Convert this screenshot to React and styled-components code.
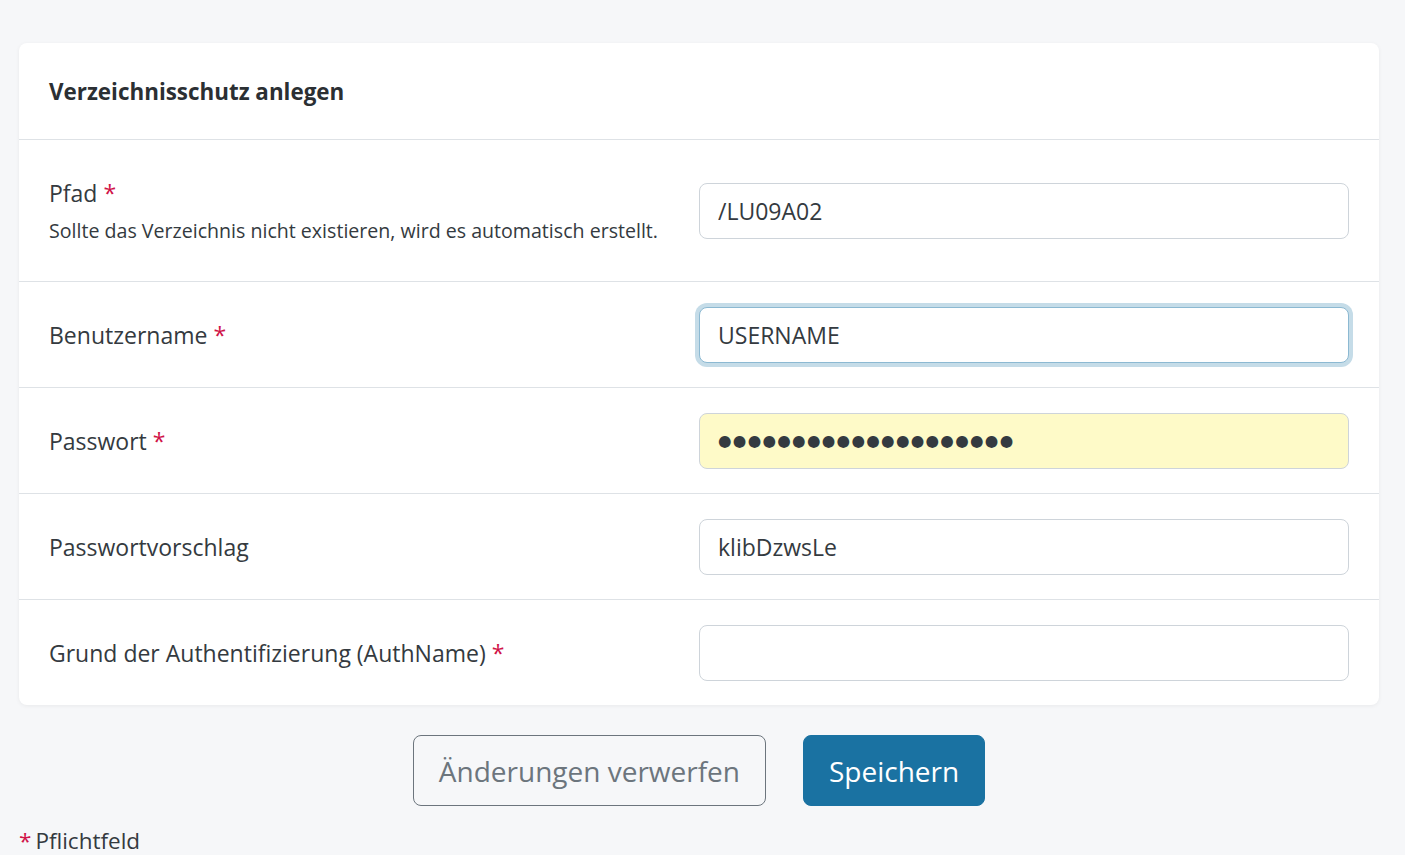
import React from "react";
import styled, { createGlobalStyle } from "styled-components";

const GlobalStyle = createGlobalStyle`
  html, body {
    margin: 0;
    padding: 0;
    background: #f6f7f9;
  }
  body {
    font-family: "Segoe UI", "Open Sans", sans-serif;
    color: #343a40;
  }
  * {
    box-sizing: border-box;
  }
`;

const Page = styled.div`
  padding: 43px 26px 0 19px;
`;

const Card = styled.div`
  background: #fff;
  border-radius: 8px;
  box-shadow: 0 1px 4px rgba(0, 0, 0, 0.06);
`;

const CardHeader = styled.div`
  height: 97px;
  display: flex;
  align-items: center;
  padding: 0 30px;
  border-bottom: 1px solid #dee2e6;
`;

const Title = styled.h2`
  margin: 0;
  font-size: 22.4px;
  font-weight: 700;
  color: #2b2f33;
`;

const Row = styled.div`
  display: grid;
  grid-template-columns: 650px 650px;
  align-items: center;
  padding: ${(p) => (p.tall ? "38px 30px 37px" : "25px 30px 24px")};
  border-bottom: ${(p) => (p.last ? "none" : "1px solid #dee2e6")};
`;

const LabelBox = styled.div`
  display: flex;
  flex-direction: column;
  gap: 8px;
`;

const Label = styled.label`
  font-size: 23px;
  line-height: 31px;
  color: #343a40;
`;

const Req = styled.span`
  color: #d01348;
  margin-left: ${(p) => (p.lead ? "0" : "6px")};
  margin-right: ${(p) => (p.lead ? "4px" : "0")};
`;

const Help = styled.div`
  font-size: 19.6px;
  line-height: 27px;
  color: #343a40;
`;

const Input = styled.input`
  width: 650px;
  height: 56px;
  padding: 0 18px;
  font-family: inherit;
  font-size: 23px;
  color: #343a40;
  caret-color: #212529;
  border: 1px solid ${(p) => (p.$focused ? "#8cb9d2" : "#ced4da")};
  border-radius: 8px;
  background: #fff;
  box-shadow: ${(p) => (p.$focused ? "0 0 0 4px #c5dce8" : "none")};
  outline: none;
`;

const MaskedInput = styled(Input)`
  background: #fefac8;
  font-family: "DejaVu Sans", sans-serif;
  font-size: 15.5px;
  letter-spacing: 1.3px;
  color: #343a40;
`;

const Actions = styled.div`
  display: flex;
  justify-content: center;
  gap: 37px;
  margin-top: 30px;
`;

const Button = styled.button`
  height: 71px;
  padding: 0 25px;
  font-family: inherit;
  font-size: 28px;
  border-radius: 8px;
  cursor: pointer;
  border: 1px solid ${(p) => (p.$primary ? "#1a72a2" : "#6c757d")};
  background: ${(p) => (p.$primary ? "#1a72a2" : "transparent")};
  color: ${(p) => (p.$primary ? "#fff" : "#6c757d")};
`;

const Footnote = styled.div`
  margin-top: 19px;
  font-size: 22.5px;
  color: #343a40;
`;

const fields = [
  { label: "Benutzername", required: true, value: "USERNAME", focused: true },
  { label: "Passwort", required: true, value: "●".repeat(20), masked: true },
  { label: "Passwortvorschlag", value: "klibDzwsLe" },
  { label: "Grund der Authentifizierung (AuthName)", required: true, value: "" },
];

export default function App() {
  return (
    <Page>
      <GlobalStyle />
      <Card>
        <CardHeader>
          <Title>Verzeichnisschutz anlegen</Title>
        </CardHeader>
        <Row tall>
          <LabelBox>
            <Label>
              Pfad<Req>*</Req>
            </Label>
            <Help>Sollte das Verzeichnis nicht existieren, wird es automatisch erstellt.</Help>
          </LabelBox>
          <Input defaultValue="/LU09A02" />
        </Row>
        {fields.map((f, i) => {
          const Field = f.masked ? MaskedInput : Input;
          return (
            <Row key={f.label} last={i === fields.length - 1}>
              <Label>
                {f.label}
                {f.required && <Req>*</Req>}
              </Label>
              <Field
                type="text"
                defaultValue={f.value}
                $focused={f.focused}
                autoFocus={f.focused}
              />
            </Row>
          );
        })}
      </Card>
      <Actions>
        <Button>Änderungen verwerfen</Button>
        <Button $primary>Speichern</Button>
      </Actions>
      <Footnote>
        <Req lead>*</Req>
        Pflichtfeld
      </Footnote>
    </Page>
  );
}
